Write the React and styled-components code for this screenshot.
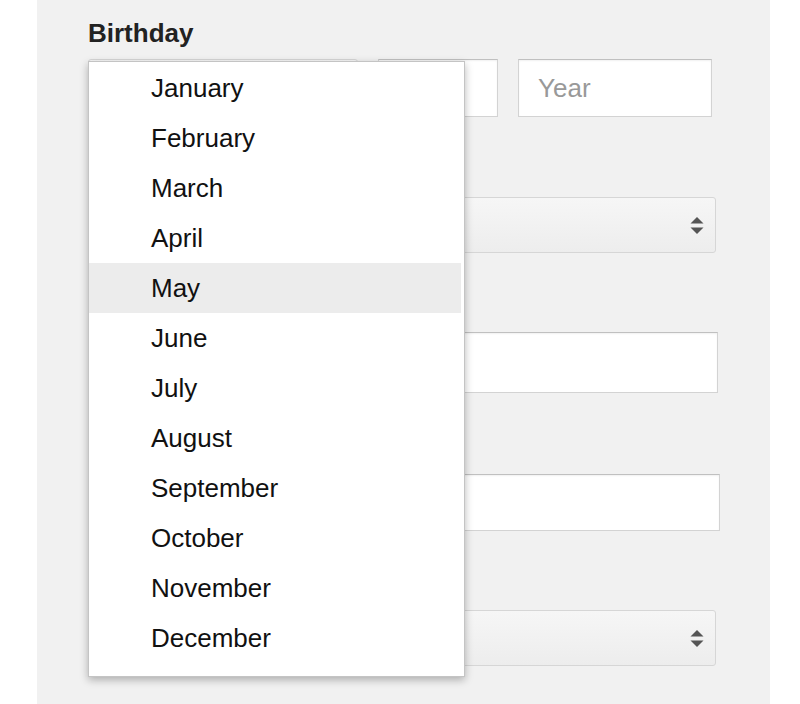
import React from "react";
import styled, { createGlobalStyle } from "styled-components";

const Global = createGlobalStyle`
  html, body { margin: 0; padding: 0; background: #ffffff; }
  body { font-family: "Liberation Sans", Arial, Helvetica, sans-serif; color: #222; }
  * { box-sizing: border-box; }
`;

const Page = styled.div`
  width: 800px;
  height: 704px;
  overflow: hidden;
  background: #ffffff;
`;

const Panel = styled.div`
  position: relative;
  margin-left: 37px;
  width: 733px;
  height: 704px;
  background: #f1f1f1;
  padding: 18px 0 0 51px;
  display: flex;
  flex-direction: column;
  align-items: flex-start;
`;

const Label = styled.div`
  font-weight: bold;
  font-size: 26px;
  line-height: 30px;
  color: #222;
  margin-bottom: 11px;
`;

const Row = styled.div`
  display: flex;
  gap: 20px;
`;

const Field = styled.div`
  margin-top: ${p => p.$gap || 80}px;
`;

const Input = styled.div`
  width: ${p => p.$w}px;
  height: ${p => p.$h || 58}px;
  background: #fff;
  border: 1px solid #d3d3d3;
  border-top-color: #c0c0c0;
  box-shadow: inset 0 1px 2px rgba(0,0,0,0.06);
  font-size: 26px;
  color: #999;
  display: flex;
  align-items: center;
  padding-left: 19px;
  padding-top: 1px;
`;

const Select = styled.div`
  width: ${p => p.$w}px;
  height: 56px;
  border: 1px solid #d6d6d6;
  border-radius: 3px;
  background: linear-gradient(#f6f6f6, #ededed);
  display: flex;
  align-items: center;
  justify-content: flex-end;
  padding-right: 11px;
`;

const Menu = styled.ul`
  position: absolute;
  left: 51px;
  top: 61px;
  width: 377px;
  height: 616px;
  margin: 0;
  padding: 1px 3px 14px 0;
  list-style: none;
  background: #fff;
  border: 1px solid #c4c4c4;
  box-shadow: 0 3px 8px rgba(0,0,0,0.28);
`;

const Item = styled.li`
  height: 50px;
  display: flex;
  align-items: center;
  padding-left: 62px;
  font-size: 26px;
  color: #111;
  background: ${p => p.$active ? "#ececec" : "transparent"};
`;

const Arrows = () => (
  <svg width="14" height="19" viewBox="0 0 14 19">
    <path d="M7 1 L13.5 7.5 L0.5 7.5 Z" fill="#555" />
    <path d="M0.5 11.5 L13.5 11.5 L7 18 Z" fill="#555" />
  </svg>
);

const months = ["January","February","March","April","May","June","July","August","September","October","November","December"];

export default function App() {
  return (
    <Page>
      <Global />
      <Panel>
        <Label>Birthday</Label>
        <Row>
          <Select $w={270} />
          <Input $w={120} />
          <Input $w={194}>Year</Input>
        </Row>
        <Field $gap={80}>
          <Select $w={628}><Arrows /></Select>
        </Field>
        <Field $gap={79}>
          <Input $w={630} $h={61} />
        </Field>
        <Field $gap={81}>
          <Input $w={632} $h={57} />
        </Field>
        <Field $gap={79}>
          <Select $w={628}><Arrows /></Select>
        </Field>
        <Menu>
          {months.map((m, i) => (
            <Item key={m} $active={i === 4}>{m}</Item>
          ))}
        </Menu>
      </Panel>
    </Page>
  );
}
